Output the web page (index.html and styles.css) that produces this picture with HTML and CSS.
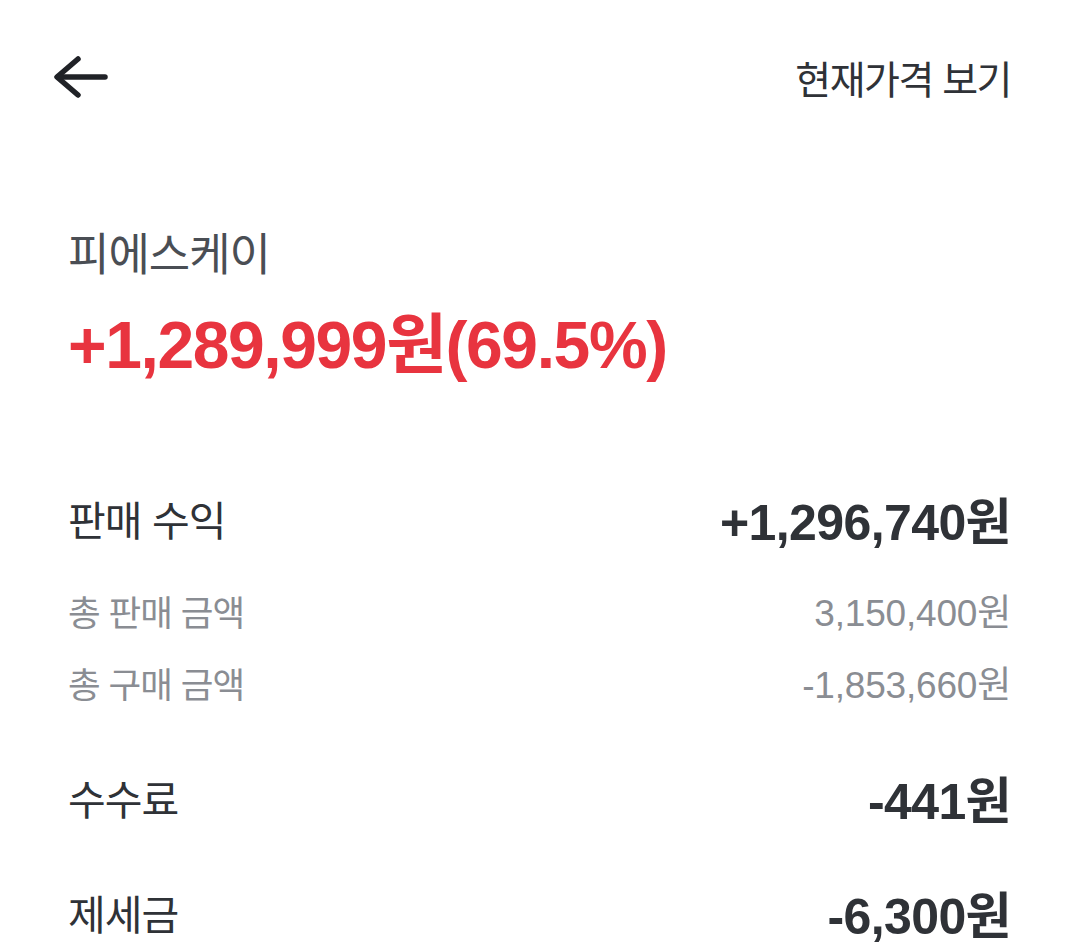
FILE: index.html
```html
<!DOCTYPE html>
<html lang="ko">
<head>
<meta charset="utf-8">
<link rel="stylesheet" href="styles.css">
</head>
<body>
<div class="page">
  <header class="header">
    <button class="back" aria-label="뒤로">
      <svg width="56" height="48" viewBox="0 0 56 48" fill="none" stroke="#202227" stroke-width="5.5" stroke-linecap="round" stroke-linejoin="round">
        <path d="M25 6 L4 24 L25 42"/>
        <path d="M5 24 H52"/>
      </svg>
    </button>
    <span class="link">현재가격 보기</span>
  </header>
  <section class="summary">
    <div class="name">피에스케이</div>
    <div class="profit num">+1,289,999원(69.5%)</div>
  </section>
  <section class="details">
    <div class="row main first"><span>판매 수익</span><span class="val num">+1,296,740원</span></div>
    <div class="row sub s1"><span>총 판매 금액</span><span class="num">3,150,400원</span></div>
    <div class="row sub s2"><span>총 구매 금액</span><span class="num">-1,853,660원</span></div>
    <div class="row main gap"><span>수수료</span><span class="val num">-441원</span></div>
    <div class="row main gap"><span>제세금</span><span class="val num">-6,300원</span></div>
  </section>
</div>
</body>
</html>
```

FILE: styles.css
```css
* { box-sizing: border-box; }
html, body { margin: 0; padding: 0; background: #ffffff; }
body {
  font-family: "Noto Sans CJK KR", "Noto Sans", sans-serif;
  color: #2f3237;
  overflow: hidden;
}
.num { font-family: "Liberation Sans", "Noto Sans CJK KR", sans-serif; }
.page { padding: 0 69px 0 68px; }
.header {
  height: 154px;
  display: flex;
  align-items: center;
  justify-content: space-between;
}
.back {
  border: 0;
  background: none;
  padding: 0;
  margin-left: -15px;
  display: flex;
}
.link {
  font-size: 39px;
  line-height: 50px;
  letter-spacing: -1.5px;
  color: #2f3237;
}
.summary { margin-top: 73px; }
.name {
  font-size: 45px;
  line-height: 50px;
  letter-spacing: -1px;
  color: #4a4e54;
}
.profit {
  margin-top: 28px;
  font-size: 66px;
  line-height: 80px;
  font-weight: 700;
  color: #e8343f;
  letter-spacing: -1.4px;
}
.details { margin-top: 103px; }
.row {
  display: flex;
  justify-content: space-between;
  align-items: center;
  height: 60px;
}
.main { font-size: 41px; letter-spacing: -1px; color: #2f3237; }
.main .val { font-weight: 700; font-size: 50px; letter-spacing: -0.6px; }
.sub { font-size: 35.5px; color: #8a8d93; letter-spacing: -1px; }
.sub .num { font-size: 37px; letter-spacing: -0.2px; }
.s1 { margin-top: 32px; }
.s2 { margin-top: 12px; }
.gap { margin-top: 55px; }
```
